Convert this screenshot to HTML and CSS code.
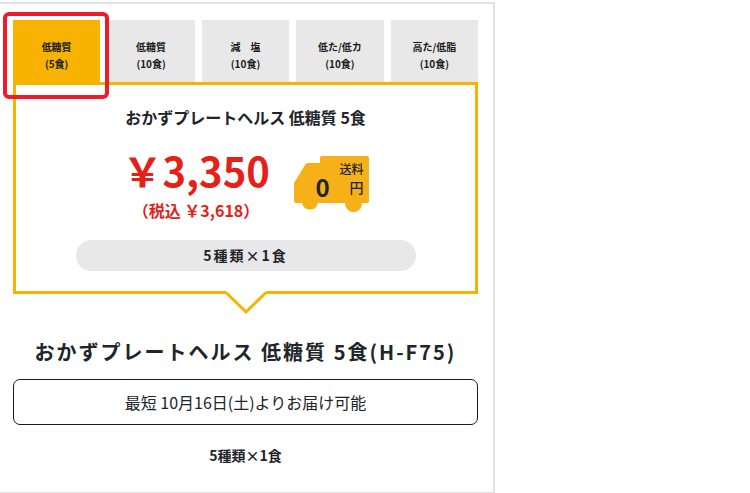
FILE: index.html
```
<!DOCTYPE html>
<html lang="ja">
<head>
    <meta charset="UTF-8">
    <title>おかずプレートヘルス 低糖質 5食</title>
    <link rel="stylesheet" href="styles.css">
</head>
<body>
<div class="product">
    <!--タブ-->
    <ul class="tabs">
        <li class="current">低糖質<br>(5食)</li>
        <li>低糖質<br>(10食)</li>
        <li>減　塩<br>(10食)</li>
        <li>低た/低カ<br>(10食)</li>
        <li>高た/低脂<br>(10食)</li>
    </ul>
    <!--価格-->
    <div class="panel">
        <p class="name">おかずプレートヘルス 低糖質 5食</p>
        <div class="price-row">
            <div class="price">
                <p class="yen">￥3,350</p>
                <p class="tax">（税込 ￥3,618）</p>
            </div>
            <div class="truck">
                <svg width="75" height="56" viewBox="0 0 75 56">
                    <path fill="#f7b118" d="M26 7V2q0-2 2-2h45q2 0 2 2v43q0 2-2 2h-5a8.3 9 0 0 1-17 0H24a8.3 9 0 0 1-16 0H2q-2 0-2-2V27L11 9q1-2 3-2z"/>
                </svg>
                <span class="label">送料</span>
                <span class="fee">0</span>
                <span class="unit">円</span>
            </div>
        </div>
        <p class="pill">5種類×1食</p>
        <svg class="arrow" width="42" height="24" viewBox="0 0 42 24">
            <path fill="#fff" d="M1 0h40v2L21 21 1 2z"/>
            <path fill="none" stroke="#f8b200" stroke-width="3" d="M1 1.5L21 21 41 1.5"/>
        </svg>
    </div>
    <h2>おかずプレートヘルス 低糖質 5食(H-F75)</h2>
    <p class="delivery">最短 10月16日(土)よりお届け可能</p>
    <p class="count">5種類×1食</p>
    <div class="mark"></div>
</div>
</body>
</html>
```
FILE: styles.css
```
* {
    margin: 0;
    padding: 0;
    box-sizing: border-box;
}

body {
    padding-top: 2px;
    background-color: #fff;
    color: #212529;
    font-family: "Noto Sans CJK JP", sans-serif;
    text-align: center;
}

.product {
    position: relative;
    width: 495px;
    height: 491px;
    padding: 16px 15px 0 13px;
    border: 2px solid #e2e2e2;
    border-left: none;
    border-bottom-width: 1px;
}

/*タブ*/
.tabs {
    display: flex;
    gap: 7.2px;
    list-style: none;
}

.tabs li {
    flex: 1;
    height: 62px;
    padding-top: 18px;
    background-color: #e8e8e8;
    color: #1a1a1a;
    font-size: 10px;
    font-weight: bold;
    line-height: 17px;
}

.tabs .current {
    background-color: #f8b200;
}

/*価格*/
.panel {
    position: relative;
    height: 212px;
    padding-top: 20px;
    border: 3px solid #f8b200;
}

.name {
    font-size: 16px;
    font-weight: bold;
    line-height: 24px;
}

.price-row {
    display: flex;
    justify-content: center;
    gap: 24px;
    height: 111px;
    padding-top: 13px;
}

.price {
    width: 147px;
    color: #e61f19;
    font-weight: bold;
    white-space: nowrap;
}

.yen {
    font-size: 40px;
    line-height: 56px;
}

.tax {
    font-size: 16px;
    line-height: 24px;
}

.truck {
    position: relative;
    width: 75px;
    height: 56px;
    margin-top: 14px;
}

.truck svg {
    display: block;
}

.truck span {
    position: absolute;
    line-height: 1;
}

.truck .label {
    top: 7px;
    right: 5px;
    font-size: 12px;
    font-weight: 500;
}

.truck .fee {
    top: 19px;
    left: 22px;
    font-size: 24px;
    font-weight: bold;
}

.truck .unit {
    top: 24px;
    right: 5px;
    font-size: 14px;
    font-weight: 500;
}

.pill {
    width: 340px;
    height: 31px;
    margin: 0 auto;
    border-radius: 16px;
    background-color: #e8e8e8;
    font-size: 14px;
    font-weight: bold;
    letter-spacing: 2px;
    line-height: 31px;
}

/*吹き出しの矢印*/
.arrow {
    position: absolute;
    top: 206px;
    left: 209px;
}

h2 {
    margin-top: 42px;
    font-size: 20px;
    font-weight: bold;
    letter-spacing: 2px;
    line-height: 32px;
    white-space: nowrap;
}

.delivery {
    height: 46px;
    margin-top: 11px;
    border: 1px solid #1a1a1a;
    border-radius: 7px;
    font-size: 16px;
    line-height: 44px;
}

.count {
    margin-top: 20px;
    font-size: 14px;
    font-weight: bold;
    line-height: 21px;
}

/*選択中のタブを囲む枠*/
.mark {
    position: absolute;
    top: 8px;
    left: 3px;
    width: 106px;
    height: 87px;
    border: 4px solid #ed1c2b;
    border-radius: 6px;
}
```
